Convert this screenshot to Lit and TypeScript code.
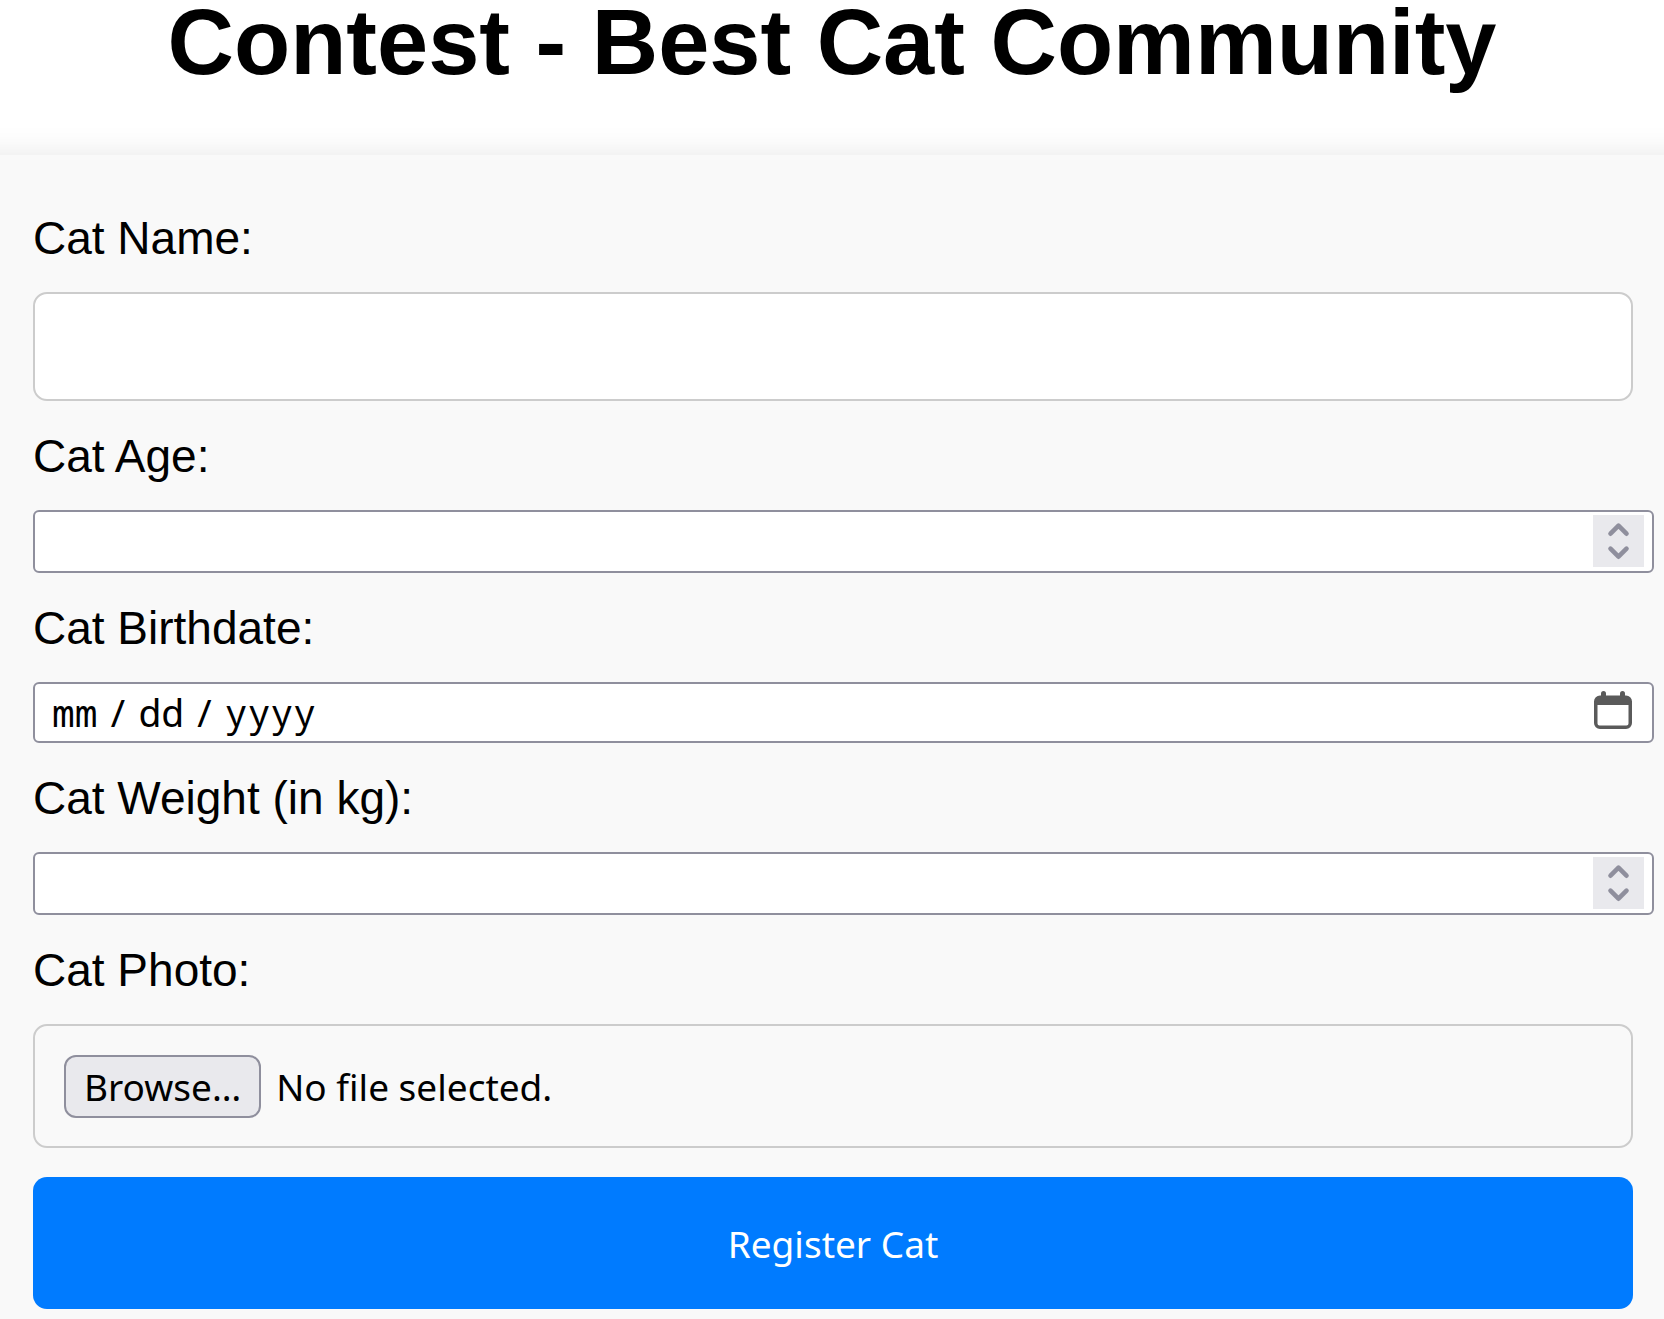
import { LitElement, html, css } from "lit";
import { customElement, property, state } from "lit/decorators.js";

@customElement("number-field")
export class NumberField extends LitElement {
  @property() label = "";
  @property() step = "1";

  static styles = css`
    :host {
      display: block;
    }
    .label {
      display: block;
      margin: 29px 0 27px;
      line-height: 53px;
    }
    .box {
      display: flex;
      align-items: center;
      box-sizing: border-box;
      height: 63px;
      margin-right: -21px;
      padding: 0 8px 1px 0;
      border: 2px solid #8f8f9d;
      border-radius: 6px;
      background: #fff;
    }
    .input {
      flex: 1;
      min-width: 0;
      border: 0;
      outline: 0;
      padding: 0 18px;
      background: none;
      font: 37px "Noto Sans", sans-serif;
      appearance: textfield;
    }
    .input::-webkit-inner-spin-button {
      appearance: none;
      margin: 0;
    }
    .spinner {
      display: flex;
      flex-direction: column;
      background: #e9e9ed;
    }
    .step {
      display: block;
      padding: 0;
      border: 0;
      background: none;
      height: 26px;
    }
    .icon {
      display: block;
      fill: none;
      stroke: #8f8f9d;
      stroke-width: 4.6;
      stroke-linecap: round;
      stroke-linejoin: round;
    }
  `;

  private move(direction: number) {
    const input = this.renderRoot.querySelector("input")!;
    if (direction > 0) input.stepUp();
    else input.stepDown();
  }

  render() {
    return html`
      <label class="label" for="value">${this.label}</label>
      <div class="box">
        <input class="input" id="value" type="number" step=${this.step} />
        <div class="spinner">
          <button class="step" type="button" aria-label="Increase" @click=${() => this.move(1)}>
            <svg class="icon" width="51" height="26" viewBox="0 0 51 26"><path d="M17.5 18.7 25.5 10.7 33.5 18.7" /></svg>
          </button>
          <button class="step" type="button" aria-label="Decrease" @click=${() => this.move(-1)}>
            <svg class="icon" width="51" height="26" viewBox="0 0 51 26"><path d="M17.5 7.7 25.5 15.7 33.5 7.7" /></svg>
          </button>
        </div>
      </div>
    `;
  }
}

@customElement("app-root")
export class AppRoot extends LitElement {
  @state() private fileName = "";

  static styles = css`
    :host {
      display: flex;
      flex-direction: column;
      min-height: 100vh;
      overflow-x: clip;
      background: #fff;
      color: #000;
      font: 46px "Liberation Sans", Arial, sans-serif;
    }
    .title {
      margin: 0;
      padding-bottom: 71px;
      font-size: 92px;
      font-weight: bold;
      line-height: 84px;
      text-align: center;
    }
    /* Bleeds past both window edges so the shadow stays even across the top. */
    .form {
      flex: 1;
      margin: 0 -40px;
      padding: 28px 71px 10px 73px;
      background: #f9f9f9;
      box-shadow: 0 0 29px rgba(0, 0, 0, 0.1);
    }
    .label {
      display: block;
      margin: 29px 0 27px;
      line-height: 53px;
    }
    .text {
      display: block;
      box-sizing: border-box;
      width: 100%;
      height: 109px;
      padding: 0 28px;
      border: 2px solid #ccc;
      border-radius: 14px;
      background: #fff;
      font: 37px "Noto Sans", sans-serif;
    }
    .date-box {
      display: flex;
      align-items: center;
      box-sizing: border-box;
      height: 61px;
      margin-right: -21px;
      padding: 0 20px 2px 17px;
      border: 2px solid #8f8f9d;
      border-radius: 6px;
      background: #fff;
    }
    .date {
      flex: 1;
      min-width: 0;
      height: 55px;
      border: 0;
      outline: 0;
      padding: 0;
      background: none;
      color: #000;
      font: 38px "Noto Sans Mono", "DejaVu Sans Mono", monospace;
    }
    .date::-webkit-calendar-picker-indicator {
      display: none;
    }
    .date::-webkit-datetime-edit,
    .date::-webkit-datetime-edit-month-field,
    .date::-webkit-datetime-edit-day-field,
    .date::-webkit-datetime-edit-year-field {
      padding: 0;
    }
    .date::-webkit-datetime-edit-text {
      padding: 0 9px;
    }
    .pick {
      display: block;
      padding: 0 0 4px;
      border: 0;
      background: none;
    }
    .calendar {
      display: block;
    }
    .file-box {
      position: relative;
      display: flex;
      align-items: center;
      gap: 15px;
      box-sizing: border-box;
      height: 124px;
      padding: 0 29px;
      border: 2px solid #ccc;
      border-radius: 14px;
      font: 37px "Noto Sans", sans-serif;
    }
    .file {
      position: absolute;
      inset: 0;
      width: 100%;
      opacity: 0;
    }
    .browse {
      box-sizing: border-box;
      height: 63px;
      padding: 0 18px;
      border: 2px solid #8f8f9d;
      border-radius: 12px;
      background: #e9e9ed;
      line-height: 59px;
    }
    .submit {
      display: block;
      width: 100%;
      height: 132px;
      margin-top: 29px;
      border: 0;
      border-radius: 14px;
      background: #007bff;
      color: #fff;
      font: 37px "Noto Sans", sans-serif;
    }
  `;

  private openPicker() {
    (this.renderRoot.querySelector("#birthdate") as HTMLInputElement).showPicker();
  }

  private onFile(event: Event) {
    this.fileName = (event.target as HTMLInputElement).files?.[0]?.name ?? "";
  }

  render() {
    return html`
      <h1 class="title">Contest - Best Cat Community</h1>
      <form class="form" @submit=${(e: Event) => e.preventDefault()}>
        <label class="label" for="name">Cat Name:</label>
        <input class="text" id="name" type="text" />

        <number-field label="Cat Age:"></number-field>

        <label class="label" for="birthdate">Cat Birthdate:</label>
        <div class="date-box">
          <input class="date" id="birthdate" type="date" />
          <button class="pick" type="button" aria-label="Open calendar" @click=${this.openPicker}>
            <svg class="calendar" width="38" height="38" viewBox="0 0 38 38" fill="#5a5a5a">
              <rect x="7" y="0" width="5" height="9" rx="2.5" />
              <rect x="26" y="0" width="5" height="9" rx="2.5" />
              <path fill-rule="evenodd" d="M6 4.500H32A6 6 0 0 1 38 10.500V32A6 6 0 0 1 32 38H6A6 6 0 0 1 0 32V10.500A6 6 0 0 1 6 4.500ZM3.500 14V32.500A2 2 0 0 0 5.500 34.500H32.500A2 2 0 0 0 34.500 32.500V14Z" />
            </svg>
          </button>
        </div>

        <number-field label="Cat Weight (in kg):" step="0.1"></number-field>

        <label class="label" for="photo">Cat Photo:</label>
        <div class="file-box">
          <span class="browse">Browse…</span>
          <span>${this.fileName || "No file selected."}</span>
          <input class="file" id="photo" type="file" accept="image/*" @change=${this.onFile} />
        </div>

        <button class="submit" type="submit">Register Cat</button>
      </form>
    `;
  }
}
